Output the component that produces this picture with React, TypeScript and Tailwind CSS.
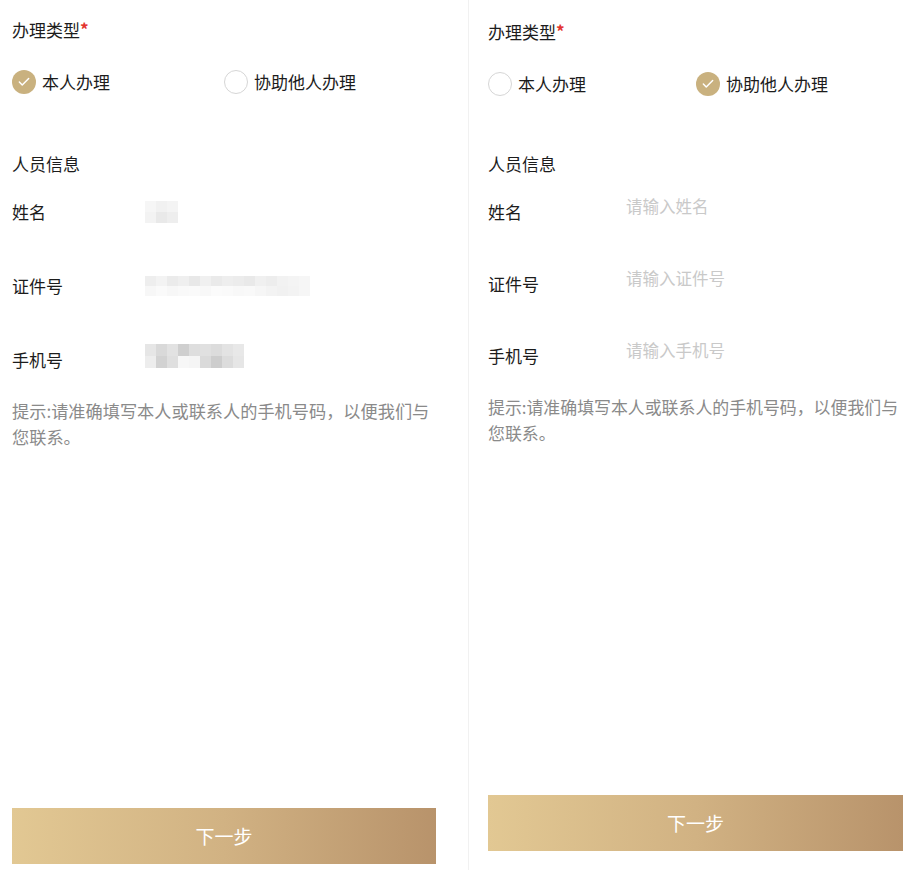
import { Check } from 'lucide-react'

type Variant = 'self' | 'other'

// blurred (mosaic) values on the filled-in form
const nameMosaic = [
  ['bg-[#f6f6f6]', 'bg-[#f1f1f1]', 'bg-[#f4f4f4]'],
  ['bg-[#f3f3f3]', 'bg-[#e9e9e9]', 'bg-[#eeeeee]'],
]
const idMosaic = [
  ['bg-[#eeeeee]', 'bg-[#f3f3f3]', 'bg-[#ebebeb]', 'bg-[#efefef]', 'bg-[#e8e8e8]', 'bg-[#f0f0f0]', 'bg-[#eaeaea]', 'bg-[#eeeeee]', 'bg-[#ececec]', 'bg-[#e9e9e9]', 'bg-[#f0f0f0]', 'bg-[#ededed]', 'bg-[#f2f2f2]', 'bg-[#f4f4f4]', 'bg-[#f6f6f6]'],
  ['bg-[#f7f7f7]', 'bg-[#fafafa]', 'bg-[#f7f7f7]', 'bg-[#f9f9f9]', 'bg-[#fafafa]', 'bg-[#f8f8f8]', 'bg-[#fbfbfb]', 'bg-[#fafafa]', 'bg-[#f8f8f8]', 'bg-[#f9f9f9]', 'bg-[#f6f6f6]', 'bg-[#f3f3f3]', 'bg-[#f1f1f1]', 'bg-[#f3f3f3]', 'bg-[#f6f6f6]'],
]
const phoneMosaic = [
  ['bg-[#e6e6e6]', 'bg-[#d9d9d9]', 'bg-[#e2e2e2]', 'bg-[#cfcfcf]', 'bg-[#dedede]', 'bg-[#e0e0e0]', 'bg-[#dcdcdc]', 'bg-[#e3e3e3]', 'bg-[#e8e8e8]'],
  ['bg-[#ededed]', 'bg-[#d2d2d2]', 'bg-[#dfdfdf]', 'bg-[#f7f7f7]', 'bg-[#f5f5f5]', 'bg-[#dadada]', 'bg-[#cdcdcd]', 'bg-[#dcdcdc]', 'bg-[#e6e6e6]'],
]

function Mosaic({ rows, rowH }: { rows: string[][]; rowH: string }) {
  return (
    <div className="flex flex-col">
      {rows.map((row, i) => (
        <div key={i} className="flex">
          {row.map((c, j) => (
            <div key={j} className={`w-[11px] ${rowH} ${c}`} />
          ))}
        </div>
      ))}
    </div>
  )
}

function Radio({ checked, label }: { checked: boolean; label: string }) {
  return (
    <div className="flex items-center gap-[6px]">
      {checked ? (
        <span className="flex items-center justify-center w-6 h-6 rounded-full bg-[#c9b17f]">
          <Check size={14} strokeWidth={2.5} className="text-white" />
        </span>
      ) : (
        <span className="w-6 h-6 rounded-full border border-[#d6d6d6] bg-white" />
      )}
      <span className="text-[17px] leading-6 text-[#1c1c1c]">{label}</span>
    </div>
  )
}

function Panel({ variant }: { variant: Variant }) {
  const self = variant === 'self'

  return (
    <div
      className={
        self
          ? 'flex flex-col h-[870px] w-[468px] pl-3 pr-8 pt-[18px] pb-[6px]'
          : 'flex flex-col h-[870px] w-[450px] pl-[19px] pr-[15px] pt-[20px] pb-[19px] border-l border-[#f1f1f1]'
      }
    >
      <div className="flex items-start text-[17px] leading-6 text-[#1c1c1c]">
        办理类型
        <span className="mt-[3px] text-[17px] leading-4 font-bold text-[#e3342f]">*</span>
      </div>

      <div className="flex items-center mt-[28px]">
        <div className={self ? 'w-[212px]' : 'w-[208px]'}>
          <Radio checked={self} label="本人办理" />
        </div>
        <Radio checked={!self} label="协助他人办理" />
      </div>

      <div className={`text-[17px] leading-6 text-[#1c1c1c] ${self ? 'mt-[58px]' : 'mt-[56px]'}`}>
        人员信息
      </div>

      {self ? (
        <div className="flex flex-col gap-[50px] mt-6">
          <div className="flex items-center h-6">
            <span className="w-[133px] text-[17px] leading-6 text-[#1c1c1c]">姓名</span>
            <Mosaic rows={nameMosaic} rowH="h-[11px]" />
          </div>
          <div className="flex items-center h-6">
            <span className="w-[133px] text-[17px] leading-6 text-[#1c1c1c]">证件号</span>
            <Mosaic rows={idMosaic} rowH="h-[10px]" />
          </div>
          <div className="flex items-center h-6">
            <span className="w-[133px] text-[17px] leading-6 text-[#1c1c1c]">手机号</span>
            <div className="-mt-[8px]">
              <Mosaic rows={phoneMosaic} rowH="h-[12px]" />
            </div>
          </div>
        </div>
      ) : (
        <div className="flex flex-col gap-[42px] mt-[18px]">
          {[
            ['姓名', '请输入姓名'],
            ['证件号', '请输入证件号'],
            ['手机号', '请输入手机号'],
          ].map(([label, ph]) => (
            <div key={label} className="flex items-start">
              <span className="w-[138px] mt-[6px] text-[17px] leading-6 text-[#1c1c1c]">{label}</span>
              <span className="text-[16.5px] leading-6 text-[#c9c9c9]">{ph}</span>
            </div>
          ))}
        </div>
      )}

      <p
        className={`w-full mt-[26px] leading-[26px] text-[#8a8a8a] ${self ? 'text-[17.2px]' : 'text-[16.9px]'}`}
      >
        提示:请准确填写本人或联系人的手机号码，以便我们与您联系。
      </p>

      <button className="mt-auto w-full h-14 bg-gradient-to-r from-[#e2c893] via-[#d1b283] to-[#b8936b] text-white text-[19px]">
        下一步
      </button>
    </div>
  )
}

export default function App() {
  return (
    <div className="flex w-[918px] h-[870px] bg-white overflow-hidden font-['Noto_Sans_CJK_SC','Noto_Sans',sans-serif]">
      <Panel variant="self" />
      <Panel variant="other" />
    </div>
  )
}
